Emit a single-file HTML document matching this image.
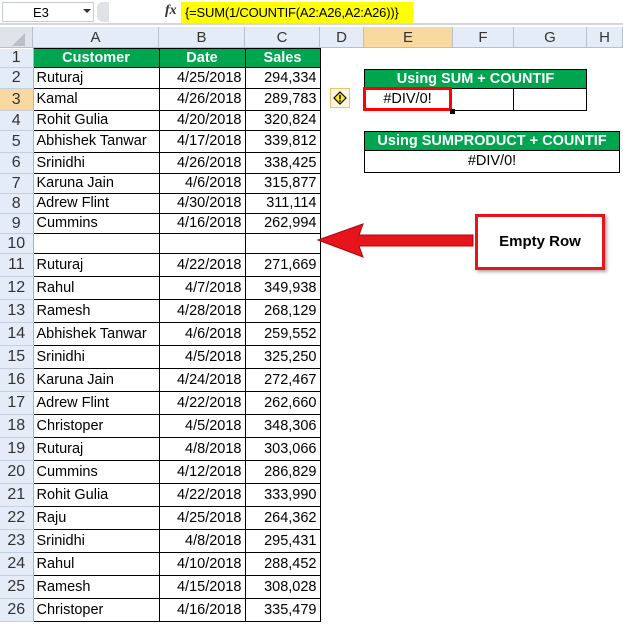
<!DOCTYPE html>
<html><head><meta charset="utf-8"><style>
*{margin:0;padding:0;box-sizing:border-box}
body{width:623px;height:625px;background:#fff;position:relative;overflow:hidden;font-family:"Liberation Sans",sans-serif;font-size:14px;color:#000}
.a{position:absolute}
.hdr{background:#e4ecf7;color:#333;text-align:center;border-right:1px solid #b6c0cf;border-bottom:1px solid #b6c0cf;font-size:15px}
table.g{position:absolute;left:0;top:27px;border-collapse:collapse;table-layout:fixed}
table.g td{padding:0 3px;white-space:nowrap;overflow:hidden;font-size:14.5px;line-height:1}
td.rh{background:#e4ecf7;color:#333;text-align:center;border-right:1px solid #9eb6ce;border-bottom:1px solid #c5cfdb;padding:0!important;font-size:16px!important}
td.d{border:1px solid #000}
td.r{text-align:right}
td.gh{background:#00a550;color:#fff;font-weight:bold;text-align:center;border:1px solid #000}
</style></head><body>
<!-- formula bar -->
<div class="a" style="left:0;top:0;width:623px;height:25px;background:#fff;border-bottom:2px solid #d4d8de"></div>
<div class="a" style="left:2px;top:2px;width:92px;height:20px;border:1px solid #c6cbd3;background:#fff;font-size:13px;padding:2px 0 0 30px">E3</div>
<div class="a" style="left:83px;top:9px;width:0;height:0;border-left:4px solid transparent;border-right:4px solid transparent;border-top:4px solid #333"></div>
<div class="a" style="left:97px;top:2px;width:12px;height:20px;border-radius:6px 0 0 6px;background:#dfe3e8"></div>
<div class="a" style="left:165px;top:3px;font-family:'Liberation Serif',serif;font-style:italic;font-size:14px;font-weight:bold;color:#333">fx</div>
<div class="a" style="left:181px;top:2px;width:232px;height:21px;background:#ffff00;font-size:13px;letter-spacing:-0.2px;padding:3px 0 0 4px;white-space:nowrap">{=SUM(1/COUNTIF(A2:A26,A2:A26))}</div>
<!-- column headers -->
<div class="a hdr" style="left:0;top:27px;width:33px;height:21px;background:#dfe4ea"></div>
<div class="a" style="left:12px;top:33px;width:0;height:0;border-left:13px solid transparent;border-bottom:13px solid #b8c0cc"></div>
<div class="a hdr" style="left:33px;top:27px;width:126px;height:21px;line-height:21px">A</div>
<div class="a hdr" style="left:159px;top:27px;width:86px;height:21px;line-height:21px">B</div>
<div class="a hdr" style="left:245px;top:27px;width:75px;height:21px;line-height:21px">C</div>
<div class="a hdr" style="left:320px;top:27px;width:44px;height:21px;line-height:21px">D</div>
<div class="a hdr" style="left:364px;top:27px;width:89px;height:21px;line-height:21px;background:#f9d99f">E</div>
<div class="a hdr" style="left:453px;top:27px;width:61px;height:21px;line-height:21px">F</div>
<div class="a hdr" style="left:514px;top:27px;width:73px;height:21px;line-height:21px">G</div>
<div class="a hdr" style="left:587px;top:27px;width:36px;height:21px;line-height:21px">H</div>
<table class="g" style="top:48px">
<colgroup><col style="width:33px"><col style="width:126px"><col style="width:86px"><col style="width:75px"></colgroup>
<tr style="height:19px"><td class="rh">1</td><td class="gh">Customer</td><td class="gh">Date</td><td class="gh">Sales</td></tr>
<tr style="height:21px"><td class="rh">2</td><td class="d">Ruturaj</td><td class="d r">4/25/2018</td><td class="d r">294,334</td></tr>
<tr style="height:22px"><td class="rh" style="background:#f9d99f">3</td><td class="d">Kamal</td><td class="d r">4/26/2018</td><td class="d r">289,783</td></tr>
<tr style="height:20px"><td class="rh">4</td><td class="d">Rohit Gulia</td><td class="d r">4/20/2018</td><td class="d r">320,824</td></tr>
<tr style="height:22px"><td class="rh">5</td><td class="d">Abhishek Tanwar</td><td class="d r">4/17/2018</td><td class="d r">339,812</td></tr>
<tr style="height:21px"><td class="rh">6</td><td class="d">Srinidhi</td><td class="d r">4/26/2018</td><td class="d r">338,425</td></tr>
<tr style="height:20px"><td class="rh">7</td><td class="d">Karuna Jain</td><td class="d r">4/6/2018</td><td class="d r">315,877</td></tr>
<tr style="height:20px"><td class="rh">8</td><td class="d">Adrew Flint</td><td class="d r">4/30/2018</td><td class="d r">311,114</td></tr>
<tr style="height:20px"><td class="rh">9</td><td class="d">Cummins</td><td class="d r">4/16/2018</td><td class="d r">262,994</td></tr>
<tr style="height:20px"><td class="rh">10</td><td class="d"></td><td class="d r"></td><td class="d r"></td></tr>
<tr style="height:23px"><td class="rh">11</td><td class="d">Ruturaj</td><td class="d r">4/22/2018</td><td class="d r">271,669</td></tr>
<tr style="height:23px"><td class="rh">12</td><td class="d">Rahul</td><td class="d r">4/7/2018</td><td class="d r">349,938</td></tr>
<tr style="height:23px"><td class="rh">13</td><td class="d">Ramesh</td><td class="d r">4/28/2018</td><td class="d r">268,129</td></tr>
<tr style="height:23px"><td class="rh">14</td><td class="d">Abhishek Tanwar</td><td class="d r">4/6/2018</td><td class="d r">259,552</td></tr>
<tr style="height:23px"><td class="rh">15</td><td class="d">Srinidhi</td><td class="d r">4/5/2018</td><td class="d r">325,250</td></tr>
<tr style="height:23px"><td class="rh">16</td><td class="d">Karuna Jain</td><td class="d r">4/24/2018</td><td class="d r">272,467</td></tr>
<tr style="height:23px"><td class="rh">17</td><td class="d">Adrew Flint</td><td class="d r">4/22/2018</td><td class="d r">262,660</td></tr>
<tr style="height:23px"><td class="rh">18</td><td class="d">Christoper</td><td class="d r">4/5/2018</td><td class="d r">348,306</td></tr>
<tr style="height:23px"><td class="rh">19</td><td class="d">Ruturaj</td><td class="d r">4/8/2018</td><td class="d r">303,066</td></tr>
<tr style="height:23px"><td class="rh">20</td><td class="d">Cummins</td><td class="d r">4/12/2018</td><td class="d r">286,829</td></tr>
<tr style="height:23px"><td class="rh">21</td><td class="d">Rohit Gulia</td><td class="d r">4/22/2018</td><td class="d r">333,990</td></tr>
<tr style="height:23px"><td class="rh">22</td><td class="d">Raju</td><td class="d r">4/25/2018</td><td class="d r">264,362</td></tr>
<tr style="height:23px"><td class="rh">23</td><td class="d">Srinidhi</td><td class="d r">4/8/2018</td><td class="d r">295,431</td></tr>
<tr style="height:23px"><td class="rh">24</td><td class="d">Rahul</td><td class="d r">4/10/2018</td><td class="d r">288,452</td></tr>
<tr style="height:23px"><td class="rh">25</td><td class="d">Ramesh</td><td class="d r">4/15/2018</td><td class="d r">308,028</td></tr>
<tr style="height:23px"><td class="rh">26</td><td class="d">Christoper</td><td class="d r">4/16/2018</td><td class="d r">335,479</td></tr>
</table>
<!-- table 1 -->
<div class="a" style="left:364px;top:69px;width:223px;height:20px;background:#00a550;border:1px solid #000;color:#fff;font-weight:bold;text-align:center;line-height:18px;font-size:14.5px">Using SUM + COUNTIF</div>
<div class="a" style="left:364px;top:88px;width:223px;height:23px;border:1px solid #000;border-top:none"></div>
<div class="a" style="left:513px;top:88px;width:1px;height:22px;background:#000"></div>
<div class="a" style="left:363px;top:87px;width:89px;height:24px;border:3px solid #f00;text-align:center;line-height:18px;font-size:14.5px">#DIV/0!</div>
<div class="a" style="left:450px;top:109px;width:5px;height:5px;background:#000"></div>
<div class="a" style="left:330px;top:88px;width:20px;height:20px;border:1px solid #f1c36a;background:#fdf6e0"></div>
<svg class="a" style="left:333px;top:91px" width="14" height="14"><polygon points="7,1 13,7 7,13 1,7" fill="#ffef00" stroke="#000" stroke-width="1.2"/><rect x="6.2" y="3.8" width="1.6" height="4.5" fill="#000"/><rect x="6.2" y="9.2" width="1.6" height="1.6" fill="#000"/></svg>
<!-- table 2 -->
<div class="a" style="left:364px;top:131px;width:256px;height:20px;background:#00a550;border:1px solid #000;color:#fff;font-weight:bold;text-align:center;line-height:18px;font-size:14.5px">Using SUMPRODUCT + COUNTIF</div>
<div class="a" style="left:364px;top:150px;width:256px;height:23px;border:1px solid #000;border-top:none;text-align:center;line-height:22px;font-size:14.5px">#DIV/0!</div>
<!-- arrow -->
<svg class="a" style="left:315px;top:220px" width="165" height="45"><polygon points="3,20 48,4 44,15 158,15 158,26 44,26 48,37" fill="#e8141b" stroke="#b0060c" stroke-width="1"/></svg>
<div class="a" style="left:475px;top:214px;width:130px;height:56px;border:3px solid #e8141b;background:#fff;box-shadow:2px 2px 3px #aaa;text-align:center;line-height:50px;font-weight:bold;font-size:15px">Empty Row</div>
</body></html>
